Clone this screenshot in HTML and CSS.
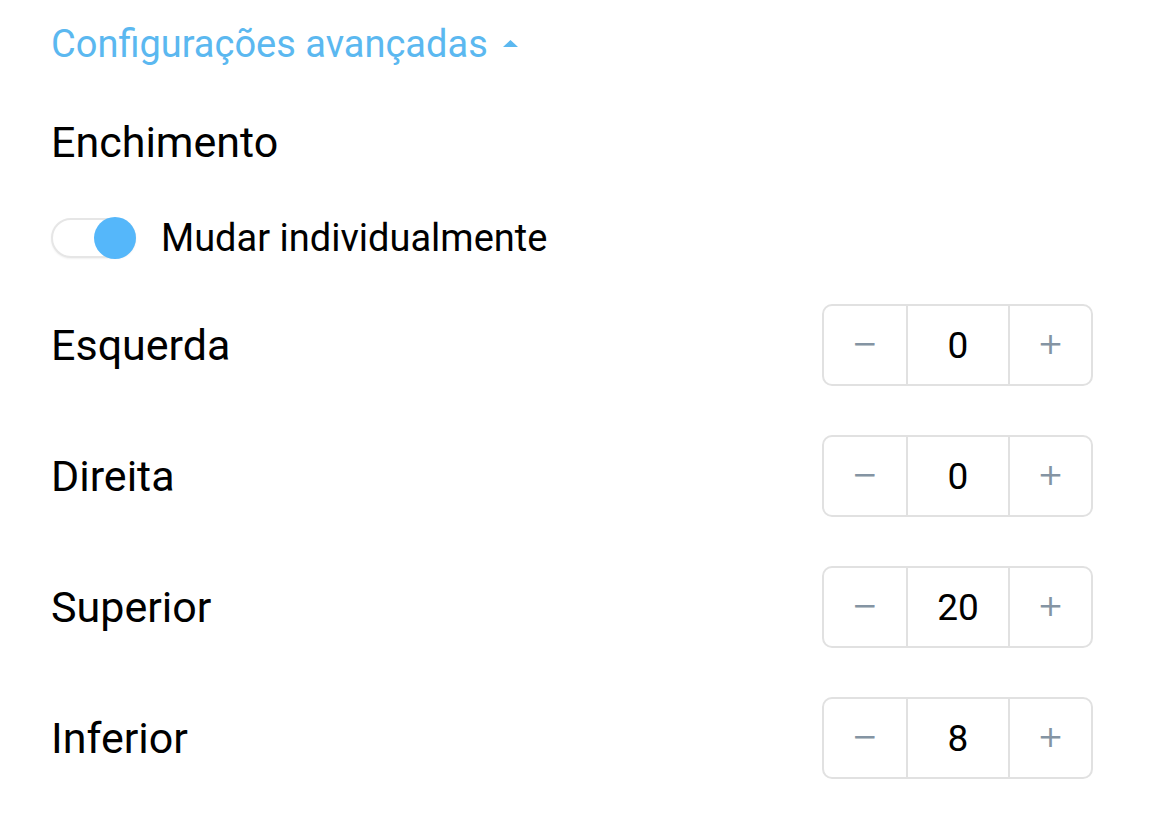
FILE: index.html
```html
<!DOCTYPE html>
<html lang="pt">
<head>
<meta charset="utf-8">
<link rel="stylesheet" href="styles.css">
</head>
<body>
<div class="panel">
  <div class="advanced">
    <span class="advanced-label">Configurações avançadas</span>
    <svg class="caret" width="15" height="7" viewBox="0 0 15 7"><path d="M0 7 L7.5 0 L15 7 Z" fill="#5bb8f0"/></svg>
  </div>
  <div class="section-title">Enchimento</div>
  <div class="toggle-row">
    <div class="toggle"><div class="toggle-thumb"></div></div>
    <span class="toggle-label">Mudar individualmente</span>
  </div>
  <div class="rows">
    <div class="row">
      <span class="row-label">Esquerda</span>
      <div class="stepper"><div class="step-btn minus">−</div><div class="step-value">0</div><div class="step-btn plus">+</div></div>
    </div>
    <div class="row">
      <span class="row-label">Direita</span>
      <div class="stepper"><div class="step-btn minus">−</div><div class="step-value">0</div><div class="step-btn plus">+</div></div>
    </div>
    <div class="row">
      <span class="row-label">Superior</span>
      <div class="stepper"><div class="step-btn minus">−</div><div class="step-value">20</div><div class="step-btn plus">+</div></div>
    </div>
    <div class="row">
      <span class="row-label">Inferior</span>
      <div class="stepper"><div class="step-btn minus">−</div><div class="step-value">8</div><div class="step-btn plus">+</div></div>
    </div>
  </div>
</div>
</body>
</html>
```
FILE: styles.css
```css
* { box-sizing: border-box; }
html, body { margin: 0; padding: 0; background: #ffffff; }
body {
  font-family: Roboto, "Liberation Sans", sans-serif;
  color: #000000;
  width: 1168px;
  height: 840px;
  overflow: hidden;
}
.panel {
  padding: 22px 75px 0 51px;
  display: flex;
  flex-direction: column;
}
.advanced {
  display: flex;
  align-items: center;
  gap: 15px;
  height: 44px;
  color: #5bb8f0;
  font-size: 38px;
}
.caret { margin-top: -1px; }
.section-title {
  margin-top: 54px;
  height: 44px;
  line-height: 44px;
  font-size: 43px;
}
.toggle-row {
  margin-top: 52px;
  display: flex;
  align-items: center;
  gap: 25px;
  height: 44px;
}
.toggle {
  width: 85px;
  height: 40px;
  border-radius: 20px;
  border: 2px solid #e6e6e6;
  background: #ffffff;
  position: relative;
  box-shadow: 0 1px 2px rgba(0,0,0,0.06);
}
.toggle-thumb {
  position: absolute;
  right: -2px;
  top: -3px;
  width: 42px;
  height: 42px;
  border-radius: 50%;
  background: #55b7fa;
}
.toggle-label { font-size: 38px; }
.rows {
  margin-top: 44px;
  display: flex;
  flex-direction: column;
  gap: 49px;
}
.row {
  display: flex;
  align-items: center;
  justify-content: space-between;
  height: 82px;
}
.row-label { font-size: 43px; }
.stepper {
  display: flex;
  width: 271px;
  height: 82px;
  border: 2px solid #e1e1e1;
  border-radius: 10px;
}
.step-btn {
  width: 82px;
  display: flex;
  align-items: center;
  justify-content: center;
  color: #8494a3;
  font-family: "DejaVu Sans", sans-serif;
  font-weight: 400;
  font-size: 31px;
  line-height: 1;
  padding-bottom: 3px;
}
.step-btn.plus { width: 81px; }
.step-value {
  flex: 1;
  display: flex;
  align-items: center;
  justify-content: center;
  border-left: 2px solid #e1e1e1;
  border-right: 2px solid #e1e1e1;
  font-size: 37px;
}
```
